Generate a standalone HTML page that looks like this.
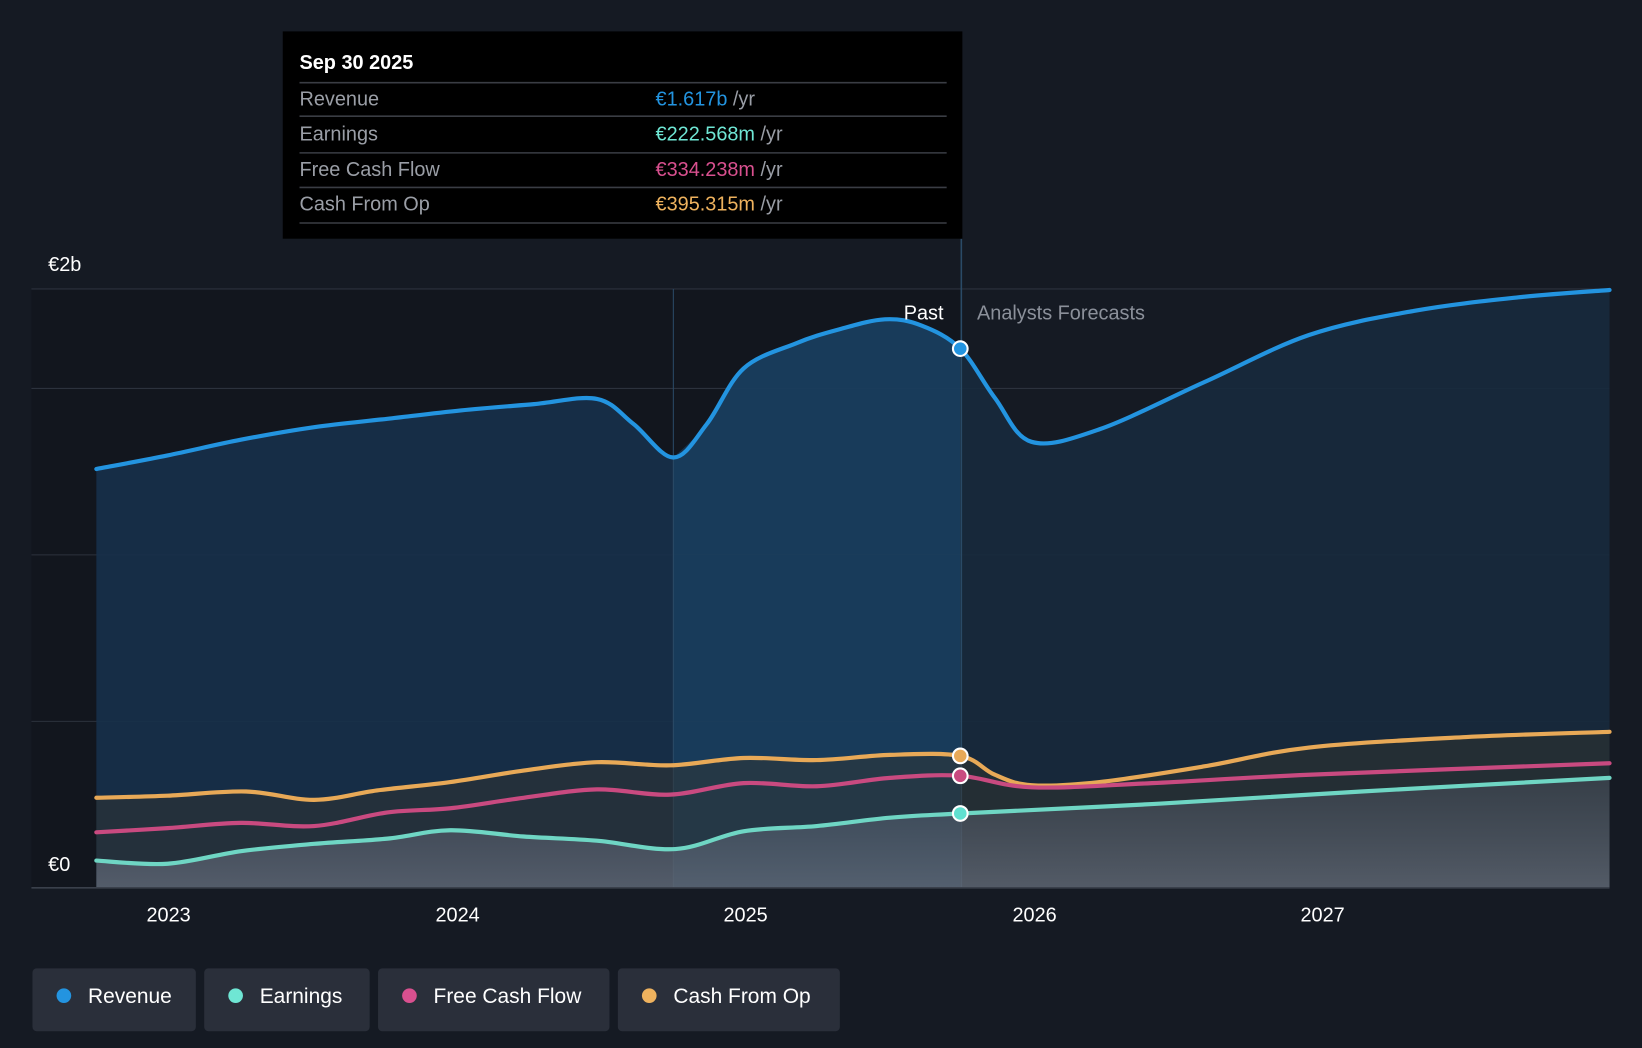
<!DOCTYPE html>
<html><head><meta charset="utf-8"><style>
html,body{margin:0;padding:0;background:#151a23;}
svg{display:block}
text{font-family:"Liberation Sans",sans-serif}
</style></head><body>
<svg id="s" width="1642" height="1048" viewBox="0 0 1568 1001" preserveAspectRatio="none">
<defs>
<linearGradient id="eg" x1="0" y1="0" x2="0" y2="1"><stop offset="0" stop-color="#5a6070" stop-opacity="0.35"/><stop offset="1" stop-color="#7a8090" stop-opacity="0.55"/></linearGradient>
</defs>
<rect width="1568" height="1001" fill="#151a23"/>
<rect x="30" y="276" width="888" height="572" fill="#12161e"/>
<g stroke="#2c323d" stroke-width="1">
<line x1="30" y1="276" x2="1537" y2="276"/>
<line x1="30" y1="371" x2="1537" y2="371"/>
<line x1="30" y1="530" x2="1537" y2="530"/>
<line x1="30" y1="689" x2="1537" y2="689"/>
</g>
<path id="revP" fill="#17304a" opacity="0.9"/>
<path id="revB" fill="#1a4568" opacity="0.6"/>
<path id="revF" fill="#172a3d" opacity="0.9"/>
<line x1="643" y1="276" x2="643" y2="848" stroke="#2a4a66" stroke-width="1"/>
<line x1="918" y1="228" x2="918" y2="848" stroke="#2a4a66" stroke-width="1.5"/>
<path id="cfoF" fill="#35352f" opacity="0.45"/>
<path id="earF" fill="url(#eg)"/>
<line x1="30" y1="848" x2="1537" y2="848" stroke="#3a404b" stroke-width="1.5"/>
<g fill="none" stroke-width="4" stroke-linejoin="round" stroke-linecap="round">
<path id="revL" stroke="#2394e0"/>
<path id="cfoL" stroke="#e8a957"/>
<path id="fcfL" stroke="#c94a80"/>
<path id="earL" stroke="#6fd6c4"/>
</g>
<g stroke="#fff" stroke-width="2">
<circle cx="917" cy="333" r="7" fill="#2394e0"/>
<circle cx="917" cy="722" r="7" fill="#e8a957"/>
<circle cx="917" cy="741" r="7" fill="#c94a80"/>
<circle cx="917" cy="777" r="7" fill="#5fe0d0"/>
</g>
<text x="46" y="259" fill="#fff" font-size="19">€2b</text>
<text x="46" y="832" fill="#fff" font-size="19">€0</text>
<text x="901" y="305" fill="#fff" font-size="19" text-anchor="end">Past</text>
<text x="933" y="305" fill="#8b909a" font-size="19">Analysts Forecasts</text>
<g fill="#fff" font-size="19" text-anchor="middle">
<text x="161" y="880">2023</text><text x="437" y="880">2024</text><text x="712" y="880">2025</text><text x="988" y="880">2026</text><text x="1263" y="880">2027</text>
</g>
<rect x="270" y="30" width="649" height="198" fill="#000"/>
<text x="286" y="66" fill="#fff" font-size="19" font-weight="bold">Sep 30 2025</text>
<g stroke="#3a3d44" stroke-width="1.5">
<line x1="286" y1="79" x2="904" y2="79"/><line x1="286" y1="111" x2="904" y2="111"/>
<line x1="286" y1="146" x2="904" y2="146"/><line x1="286" y1="179" x2="904" y2="179"/>
<line x1="286" y1="213" x2="904" y2="213"/>
</g>
<g font-size="19" fill="#9a9ea6">
<text x="286" y="101">Revenue</text><text x="286" y="134">Earnings</text>
<text x="286" y="168">Free Cash Flow</text><text x="286" y="201">Cash From Op</text>
</g>
<g font-size="19">
<text x="626" y="101"><tspan fill="#2394e0">€1.617b</tspan><tspan fill="#9a9ea6"> /yr</tspan></text>
<text x="626" y="134"><tspan fill="#6fe6d4">€222.568m</tspan><tspan fill="#9a9ea6"> /yr</tspan></text>
<text x="626" y="168"><tspan fill="#d9508f">€334.238m</tspan><tspan fill="#9a9ea6"> /yr</tspan></text>
<text x="626" y="201"><tspan fill="#eeb25e">€395.315m</tspan><tspan fill="#9a9ea6"> /yr</tspan></text>
</g>
<g font-size="20" fill="#fff">
<rect x="31" y="925" width="156" height="60" rx="4" fill="#2a2f3a"/>
<circle cx="61" cy="951" r="7" fill="#2394e0"/><text x="84" y="958">Revenue</text>
<rect x="195" y="925" width="158" height="60" rx="4" fill="#2a2f3a"/>
<circle cx="225" cy="951" r="7" fill="#6fe6d4"/><text x="248" y="958">Earnings</text>
<rect x="361" y="925" width="221" height="60" rx="4" fill="#2a2f3a"/>
<circle cx="391" cy="951" r="7" fill="#d9508f"/><text x="414" y="958">Free Cash Flow</text>
<rect x="590" y="925" width="212" height="60" rx="4" fill="#2a2f3a"/>
<circle cx="620" cy="951" r="7" fill="#eeb25e"/><text x="643" y="958">Cash From Op</text>
</g>
</svg>
<script>
function sm(p){var d="M"+p[0][0]+","+p[0][1];for(var i=0;i<p.length-1;i++){var a=p[i-1]||p[i],b=p[i],c=p[i+1],e=p[i+2]||c;var t=6;d+=" C"+(b[0]+(c[0]-a[0])/t)+","+(b[1]+(c[1]-a[1])/t)+" "+(c[0]-(e[0]-b[0])/t)+","+(c[1]-(e[1]-b[1])/t)+" "+c[0]+","+c[1];}return d;}
var rev=[[92,448],[160,435],[230,420],[300,408],[370,400],[440,392],[510,386],[570,381],[605,405],[643,437],[675,405],[710,352],[760,328],[800,315],[845,305],[880,311],[917,333],[950,380],[985,422],[1050,410],[1150,365],[1250,320],[1350,297],[1450,284],[1537,277]];
var cfo=[[92,762],[160,760],[235,756],[300,764],[360,755],[430,747],[500,736],[570,728],[640,731],[710,724],[780,726],[850,721],[917,722],[950,740],[985,750],[1050,747],[1150,732],[1250,714],[1400,704],[1537,699]];
var fcf=[[92,795],[160,791],[230,786],[300,789],[370,776],[430,772],[500,762],[570,754],[640,759],[710,748],[780,751],[850,743],[917,741],[985,752],[1100,748],[1250,740],[1537,729]];
var ear=[[92,822],[160,825],[230,813],[300,806],[370,801],[430,793],[500,799],[570,803],[645,811],[710,794],[780,789],[850,781],[917,777],[1100,768],[1300,756],[1537,743]];
function g(id,a){document.getElementById(id).setAttribute("d",a);}
function sl(p,x0,x1){return p.filter(function(q){return q[0]>=x0&&q[0]<=x1;});}
g("revL",sm(rev));g("cfoL",sm(cfo));g("fcfL",sm(fcf));g("earL",sm(ear));
g("revP",sm(sl(rev,92,917))+" L917,848 L92,848Z");
g("revB",sm(sl(rev,643,917))+" L917,848 L643,848Z");
g("revF",sm(sl(rev,917,1537))+" L1537,848 L917,848Z");
g("cfoF",sm(cfo)+" L1537,848 L92,848Z");
g("earF",sm(ear)+" L1537,848 L92,848Z");
</script>
</body></html>
